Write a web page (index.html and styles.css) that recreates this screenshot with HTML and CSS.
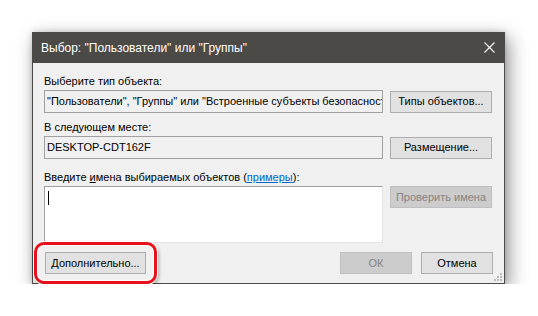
FILE: index.html
```html
<!DOCTYPE html>
<html lang="ru">
<head>
<meta charset="utf-8">
<title>Выбор</title>
<link rel="stylesheet" href="styles.css">
</head>
<body>
<div class="stage">
  <div class="dialog">
    <div class="titlebar">
      <span class="title">Выбор: "Пользователи" или "Группы"</span>
      <svg class="close" width="11" height="11" viewBox="0 0 11 11"><path d="M0.5 0.5 L10.5 10.5 M10.5 0.5 L0.5 10.5" stroke="#ffffff" stroke-width="1.1" fill="none"/></svg>
    </div>
    <div class="body">
      <div class="label">Выберите тип объекта:</div>
      <div class="row">
        <div class="field">"Пользователи", "Группы" или "Встроенные субъекты безопасности"</div>
        <div class="btn">Типы объектов...</div>
      </div>
      <div class="label label-gap">В следующем месте:</div>
      <div class="row">
        <div class="field">DESKTOP-CDT162F</div>
        <div class="btn">Размещение...</div>
      </div>
      <div class="label label-gap2">Введите <u>и</u>мена выбираемых объектов (<span class="link">примеры</span>):</div>
      <div class="row row-top">
        <div class="area"><span class="caret"></span></div>
        <div class="btn disabled">Проверить имена</div>
      </div>
      <div class="bottom">
        <div class="adv-wrap">
          <div class="btn adv">Дополнительно...</div>
          <div class="highlight"></div>
        </div>
        <div class="actions">
          <div class="btn small disabled">ОК</div>
          <div class="btn small">Отмена</div>
        </div>
      </div>
    </div>
    <svg class="grip" width="10" height="10" viewBox="0 0 10 10">
      <rect x="7" y="1" width="2" height="2" fill="#bcbcbc"/>
      <rect x="4" y="4" width="2" height="2" fill="#bcbcbc"/>
      <rect x="7" y="4" width="2" height="2" fill="#bcbcbc"/>
      <rect x="1" y="7" width="2" height="2" fill="#bcbcbc"/>
      <rect x="4" y="7" width="2" height="2" fill="#bcbcbc"/>
      <rect x="7" y="7" width="2" height="2" fill="#bcbcbc"/>
    </svg>
  </div>
</div>
</body>
</html>
```
FILE: styles.css
```css
html, body {
  margin: 0;
  padding: 0;
  background: #ffffff;
}
body {
  font-family: "Liberation Sans", Arial, sans-serif;
  font-size: 11px;
  color: #000;
}
.stage {
  padding: 32px 0 0 32px;
}
.dialog {
  position: relative;
  width: 471px;
  border: 1px solid #4b4a47;
  border-top: 0;
  background: #f0f0f0;
  box-shadow: 4px 6px 18px rgba(0,0,0,0.42), 0 0 6px rgba(0,0,0,0.15);
}
.titlebar {
  height: 31px;
  margin: 0 -1px;
  background: #4b4a47;
  display: flex;
  align-items: center;
  justify-content: space-between;
  color: #ffffff;
  font-size: 12px;
}
.title {
  padding-left: 9px;
  padding-top: 1px;
}
.close {
  margin-right: 10px;
}
.body {
  padding: 11px 11px 9px 11px;
}
.label {
  line-height: 15px;
  height: 15px;
  margin-bottom: 1px;
  white-space: nowrap;
}
.label-gap { margin-top: 7px; }
.label-gap2 { margin-top: 11px; }
.link {
  color: #0066cc;
  text-decoration: underline;
}
.row {
  display: flex;
  align-items: center;
  gap: 7px;
}
.row-top { align-items: flex-start; }
.field {
  box-sizing: border-box;
  width: 339px;
  height: 23px;
  border: 1px solid #a0a0a0;
  background: #f0f0f0;
  padding: 3px 0 0 2px;
  white-space: nowrap;
  overflow: hidden;
  line-height: 15px;
}
.area {
  box-sizing: border-box;
  width: 339px;
  height: 57px;
  background: #ffffff;
  border: 1px solid;
  border-color: #a0a0a0 #e3e3e3 #e3e3e3 #a0a0a0;
  padding: 4px 0 0 3px;
}
.caret {
  display: block;
  width: 1px;
  height: 14px;
  background: #000;
}
.btn {
  box-sizing: border-box;
  width: 102px;
  height: 22px;
  background: #e1e1e1;
  border: 1px solid #adadad;
  display: flex;
  align-items: center;
  justify-content: center;
  white-space: nowrap;
  line-height: 15px;
}
.btn.disabled {
  background: #cccccc;
  border-color: #bfbfbf;
  color: #838383;
}
.btn.small { width: 72px; }
.bottom {
  margin-top: 9px;
  display: flex;
  justify-content: space-between;
  align-items: center;
}
.adv-wrap {
  position: relative;
  margin-left: 1px;
}
.btn.adv { width: 101px; }
.highlight {
  position: absolute;
  left: -11px;
  top: -10px;
  right: -11px;
  bottom: -10px;
  border: 3px solid #e8101c;
  border-radius: 10px;
  box-shadow: inset 0 0 0 1px #ffffff, 0 0 0 1px #ffffff, 1px 2px 4px rgba(0,0,0,0.45);
}
.actions {
  display: flex;
  gap: 9px;
}
.grip {
  position: absolute;
  right: 1px;
  bottom: 1px;
}
```
